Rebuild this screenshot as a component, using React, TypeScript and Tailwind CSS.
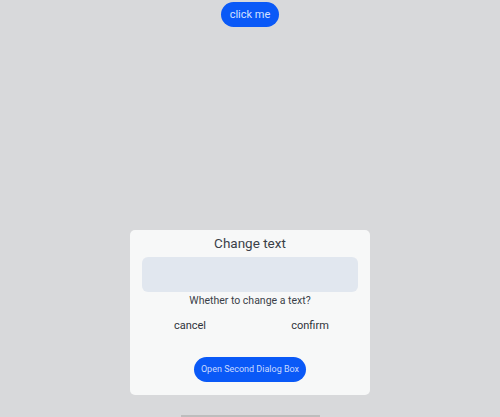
export default function App() {
  return (
    <div
      className="w-[500px] h-[417px] bg-[#d8d9db] flex flex-col items-center overflow-hidden"
      style={{ fontFamily: 'Roboto, "Noto Sans", sans-serif' }}
    >
      <button
        type="button"
        className="mt-[2px] h-[25px] w-[58px] rounded-full bg-[#0a59f7] text-[11px] leading-none text-[#d4e1ff]"
      >
        click me
      </button>

      <div className="mt-[203px] w-[240px] rounded-[5px] bg-[#f7f8f8] pt-[3px] pb-[13px] flex flex-col items-center">
        <p className="text-[13.5px] leading-[20px] text-[#3a3f48]">Change text</p>
        <div className="mt-[4px] h-[35px] w-[216px] rounded-[6px] bg-[#e1e7ef]" />
        <p className="mt-[2px] text-[10.5px] leading-[14px] text-[#3a3f48]">Whether to change a text?</p>
        <div className="mt-[10px] flex w-full">
          <span className="flex-1 text-center text-[11px] leading-[16px] text-[#2f333a]">cancel</span>
          <span className="flex-1 text-center text-[11px] leading-[16px] text-[#2f333a]">confirm</span>
        </div>
        <button
          type="button"
          className="mt-[23px] h-[25px] w-[112px] rounded-full bg-[#0a59f7] text-[9px] leading-none text-[#c9d9ff]"
        >
          Open Second Dialog Box
        </button>
      </div>

      <div className="mt-[20px] h-[2px] w-[139px] bg-[#bdbdbd]" />
    </div>
  )
}
